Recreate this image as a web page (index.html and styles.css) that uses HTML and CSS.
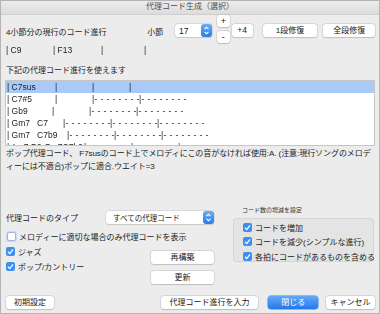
FILE: index.html
```html
<!DOCTYPE html>
<html lang="ja">
<head>
    <meta charset="UTF-8">
    <link rel="stylesheet" href="styles.css">
    <title>代理コード生成（選択）</title>
</head>
<body>
    <div class="window">
        <div class="titlebar">代理コード生成（選択）</div>
        <div class="content">
            <div class="top-row">
                <span class="label current">4小節分の現行のコード進行</span>
                <span class="label bar-label">小節</span>
                <div class="select small-select">
                    <span>17</span>
                    <span class="stepper"><svg width="7" height="9" viewBox="0 0 7 9"><path d="M1.5 3.2 L3.5 1.3 L5.5 3.2 M1.5 5.8 L3.5 7.7 L5.5 5.8" fill="none" stroke="#fff" stroke-width="1.1"/></svg></span>
                </div>
                <div class="plusminus">
                    <button class="btn tiny">+</button>
                    <button class="btn tiny">-</button>
                </div>
                <button class="btn plus4">+4</button>
                <button class="btn fix1">1段修復</button>
                <button class="btn fixall">全段修復</button>
            </div>
            <div class="chord-line">
                <span class="cell c47">| C9</span><span class="cell c48">| F13</span><span class="cell c43">|</span><span class="cell">|</span>
            </div>
            <div class="label list-title">下記の代理コード進行を使えます</div>
            <div class="list">
                <div class="list-row selected"><span class="cell w48">| C7sus</span><span class="cell seg">|</span><span class="cell seg">|</span><span class="cell">|</span></div>
                <div class="list-row"><span class="cell w48">| C7#5</span><span class="cell seg">|</span><span class="cell dash">|- - - - - - - -</span><span class="cell dash">|- - - - - - - -</span></div>
                <div class="list-row"><span class="cell w45">| Gb9</span><span class="cell seg">|</span><span class="cell dash">|- - - - - - - -</span><span class="cell dash">|- - - - - - - -</span></div>
                <div class="list-row"><span class="cell w56">| Gm7&nbsp;&nbsp;&nbsp;C7</span><span class="cell dash">|- - - - - - - -</span><span class="cell dash">|- - - - - - - -</span><span class="cell dash">|- - - - - - - -</span></div>
                <div class="list-row"><span class="cell w60">| Gm7&nbsp;&nbsp;&nbsp;C7b9</span><span class="cell dash">|- - - - - - - -</span><span class="cell dash">|- - - - - - - -</span><span class="cell dash">|- - - - - - - -</span></div>
                <div class="list-row"><span class="cell w77">| Am7 D9 Gm7C7b9</span><span class="cell dash">|- - - - - - - -</span><span class="cell dash">|- - - - - - - -</span><span class="cell dash">|- - - - - - - -</span></div>
            </div>
            <div class="desc">ポップ代理コード、 F7susのコード上でメロディにこの音がなければ使用:A. (注意:現行ソングのメロデ<br>ィーには不適合)ポップに適合.ウエイト=3</div>

            <div class="options">
                <div class="left-col">
                    <div class="type-row">
                        <span class="label">代理コードのタイプ</span>
                        <div class="select type-select">
                            <span>すべての代理コード</span>
                            <span class="stepper"><svg width="7" height="9" viewBox="0 0 7 9"><path d="M1.5 3.2 L3.5 1.3 L5.5 3.2 M1.5 5.8 L3.5 7.7 L5.5 5.8" fill="none" stroke="#fff" stroke-width="1.1"/></svg></span>
                        </div>
                    </div>
                    <label class="check melody"><span class="box empty"></span>メロディーに適切な場合のみ代理コードを表示</label>
                    <div class="style-row">
                        <div class="style-checks">
                            <label class="check"><span class="box on"><svg width="9" height="9" viewBox="0 0 9 9"><path d="M2 4.8 L3.8 6.6 L7 2.4" fill="none" stroke="#fff" stroke-width="1.3"/></svg></span>ジャズ</label>
                            <label class="check"><span class="box on"><svg width="9" height="9" viewBox="0 0 9 9"><path d="M2 4.8 L3.8 6.6 L7 2.4" fill="none" stroke="#fff" stroke-width="1.3"/></svg></span>ポップ/カントリー</label>
                        </div>
                        <div class="style-buttons">
                            <button class="btn wide">再構築</button>
                            <button class="btn wide">更新</button>
                        </div>
                    </div>
                </div>
                <div class="right-col">
                    <div class="group-label">コード数の増減を設定</div>
                    <div class="group">
                        <label class="check"><span class="box on"><svg width="9" height="9" viewBox="0 0 9 9"><path d="M2 4.8 L3.8 6.6 L7 2.4" fill="none" stroke="#fff" stroke-width="1.3"/></svg></span>コードを増加</label>
                        <label class="check"><span class="box on"><svg width="9" height="9" viewBox="0 0 9 9"><path d="M2 4.8 L3.8 6.6 L7 2.4" fill="none" stroke="#fff" stroke-width="1.3"/></svg></span>コードを減少(シンプルな進行)</label>
                        <label class="check"><span class="box on"><svg width="9" height="9" viewBox="0 0 9 9"><path d="M2 4.8 L3.8 6.6 L7 2.4" fill="none" stroke="#fff" stroke-width="1.3"/></svg></span>各拍にコードがあるものを含める</label>
                    </div>
                </div>
            </div>

            <div class="footer">
                <button class="btn reset">初期設定</button>
                <button class="btn enter">代理コード進行を入力</button>
                <button class="btn primary">閉じる</button>
                <button class="btn cancel">キャンセル</button>
            </div>
        </div>
    </div>
</body>
</html>
```

FILE: styles.css
```css
body {
    margin: 0;
    font-family: 'Liberation Sans', 'Noto Sans CJK JP', sans-serif;
    font-size: 8px;
    color: #222;
    background-color: #ececec;
    -webkit-font-smoothing: antialiased;
}

.window {
    width: 380px;
    height: 314px;
    box-sizing: border-box;
    background-color: #ececec;
    border: 1px solid #b4b4b4;
    overflow: hidden;
}

.titlebar {
    height: 13px;
    line-height: 12px;
    text-align: center;
    font-size: 8px;
    color: #4d4d4d;
    background: linear-gradient(#ececec, #dcdcdc);
    border-bottom: 1px solid #cfcfcf;
}

.content {
    padding: 0 4px;
}

.btn {
    font-family: inherit;
    font-size: 8px;
    color: #222;
    background-color: #fff;
    border: none;
    border-radius: 3px;
    box-shadow: 0 0 0 0.5px #c4c4c4, 0 0.5px 1px rgba(0, 0, 0, 0.2);
    height: 13px;
    padding: 0;
    line-height: 13px;
    white-space: nowrap;
}

.top-row {
    display: flex;
    align-items: center;
    height: 28px;
}

.label {
    white-space: nowrap;
}

.label.current {
    width: 142px;
    padding-left: 1px;
    margin-top: 4px;
}

.label.bar-label {
    width: 28px;
    margin-top: 4px;
}

.select {
    display: flex;
    align-items: center;
    justify-content: space-between;
    background-color: #fff;
    border-radius: 3px;
    box-shadow: 0 0 0 0.5px #c8c8c8, 0 0.5px 1px rgba(0, 0, 0, 0.15);
    height: 13px;
    padding-left: 4px;
    box-sizing: border-box;
}

.small-select {
    width: 37px;
    margin-top: 3px;
    font-size: 8.5px;
}

.stepper {
    width: 11px;
    height: 13px;
    border-radius: 3px;
    background: linear-gradient(#69aef7, #2a7ceb);
    display: flex;
    align-items: center;
    justify-content: center;
}

.plusminus {
    display: flex;
    flex-direction: column;
    gap: 4px;
    margin-left: 5px;
}

.btn.tiny {
    width: 13px;
    height: 12px;
    line-height: 11px;
    font-size: 9px;
}

.btn.plus4 {
    width: 21px;
    margin-left: 2px;
    margin-top: 3px;
    font-size: 8.5px;
}

.btn.fix1 {
    width: 55px;
    margin-left: 10px;
    margin-top: 3px;
}

.btn.fixall {
    width: 52px;
    margin-left: 6px;
    margin-top: 3px;
}

.cell {
    display: inline-block;
    white-space: nowrap;
    overflow: hidden;
}

.chord-line {
    display: flex;
    height: 15px;
    line-height: 15px;
    padding-left: 1px;
    font-size: 8.5px;
    will-change: transform;
}

.c47 { width: 47px; }
.c48 { width: 48px; }
.c43 { width: 43px; }

.list-title {
    height: 14px;
    line-height: 14px;
    margin-top: 6px;
    padding-left: 1px;
}

.list {
    margin-top: 2px;
    height: 66px;
    box-sizing: border-box;
    background-color: #fff;
    border: 1px solid #c6c6c6;
    overflow: hidden;
    will-change: transform;
}

.list-row {
    display: flex;
    height: 12px;
    line-height: 12px;
    padding-left: 1px;
    font-size: 8.5px;
    color: #222;
}

.list-row.selected {
    background-color: #a9c9f7;
}

.w45 { width: 45px; }
.w48 { width: 48px; }
.w56 { width: 56px; }
.w60 { width: 60px; }
.w77 { width: 77px; }

.seg {
    width: 37px;
}

.dash {
    width: 47px;
    letter-spacing: 0.4px;
}

.desc {
    margin-top: 1px;
    line-height: 13px;
    padding-left: 1px;
    height: 28px;
    white-space: nowrap;
    letter-spacing: -0.06px;
}

.options {
    display: flex;
    margin-top: 32px;
}

.left-col {
    width: 226px;
}

.type-row {
    display: flex;
    align-items: center;
    height: 14px;
    margin-top: 3px;
}

.type-row .label {
    width: 100px;
    padding-left: 1px;
}

.type-select {
    width: 108px;
    padding-left: 7px;
    font-size: 7.5px;
}

.check {
    display: flex;
    align-items: center;
    gap: 3px;
    height: 15px;
    white-space: nowrap;
}

.box {
    width: 9px;
    height: 9px;
    border-radius: 2px;
    box-sizing: border-box;
    display: flex;
    flex-shrink: 0;
}

.box.on {
    background-color: #3d8ef3;
}

.box.empty {
    background-color: #fff;
    border: 1px solid #9fb7e3;
    box-shadow: 0 0 0 1px #c9d9f4;
}

.check.melody {
    margin-top: 5px;
    padding-left: 2px;
}

.style-row {
    display: flex;
}

.style-checks {
    width: 145px;
    padding-left: 1px;
}

.style-buttons {
    display: flex;
    flex-direction: column;
    gap: 7px;
    padding-top: 7px;
}

.btn.wide {
    width: 63px;
}

.right-col {
    margin-left: 2px;
    margin-top: -1px;
}

.group-label {
    font-size: 6px;
    color: #333;
    padding-left: 9px;
    height: 8px;
    line-height: 8px;
    white-space: nowrap;
}

.group {
    width: 141px;
    height: 44px;
    box-sizing: border-box;
    margin-top: 4px;
    background-color: #e4e4e4;
    border: 1px solid #d4d4d4;
    border-radius: 3px;
    padding: 1px 0 0 9px;
}

.group .check {
    height: 14.5px;
}

.footer {
    display: flex;
    margin-top: 12px;
}

.btn.reset {
    width: 48px;
    margin-left: 1px;
}

.btn.enter {
    width: 98px;
    margin-left: 107px;
}

.btn.primary {
    width: 50px;
    margin-left: 10px;
    color: #fff;
    background: linear-gradient(#63a9f6, #2378ea);
    box-shadow: 0 0 0 0.5px #3b82e0;
}

.btn.cancel {
    width: 49px;
    margin-left: 8px;
}
```
